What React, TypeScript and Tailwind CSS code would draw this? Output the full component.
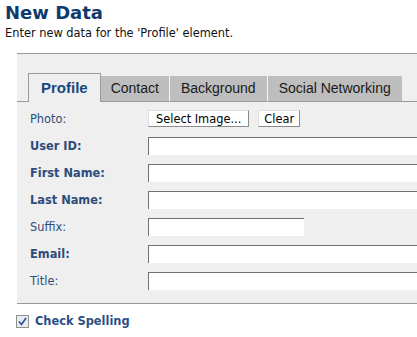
import React from "react";

const Row = ({ label, bold, children }: { label: string; bold?: boolean; children: React.ReactNode }) => (
  <div className="flex h-[27px] items-center">
    <div className={`w-[118px] text-[11.4px] leading-[14px] text-[#2e4c7a] ${bold ? "font-bold" : ""}`}>{label}</div>
    {children}
  </div>
);

const Input = ({ w }: { w?: string }) => (
  <div className={`h-[18px] bg-white border-t border-l border-[#717171] ${w ?? "w-[290px]"}`} />
);

export default function App() {
  return (
    <div className="w-[417px] h-[337px] overflow-hidden bg-white font-['DejaVu_Sans',Verdana,sans-serif] text-black">
      <div className="pl-[5px]">
        <div className="text-[18px] leading-[24px] font-bold text-[#0f3b6c] pt-[1px] h-[24px]">New Data</div>
        <div className="mt-[2px] text-[11.4px] leading-[14px] text-[#111]">Enter new data for the 'Profile' element.</div>
      </div>
      <div className="mt-[13px] ml-[17px] w-[420px] border-y border-[#9a9a9a] bg-[#efefef] pt-[19px]">
        <div className="flex items-end font-['Liberation_Sans',Arial,sans-serif]">
          <div className="w-[11px] border-b border-[#9a9a9a]" />
          <div className="h-[29px] px-[12px] border-t border-x border-[#9a9a9a] bg-[#efefef] flex items-center text-[15px] font-bold text-[#17497f]">
            Profile
          </div>
          <div className="h-[26px] px-[10px] bg-[#bebebe] border-b border-[#9a9a9a] flex items-center text-[14px] text-[#1a1a1a]">
            Contact
          </div>
          <div className="h-[26px] px-[11px] bg-[#bebebe] border-l border-l-[#f4f4f4] border-b border-b-[#9a9a9a] flex items-center text-[14px] text-[#1a1a1a]">
            Background
          </div>
          <div className="h-[26px] px-[11px] bg-[#bebebe] border-l border-l-[#f4f4f4] border-b border-b-[#9a9a9a] flex items-center text-[14px] text-[#1a1a1a]">
            Social Networking
          </div>
          <div className="flex-1 border-b border-[#9a9a9a]" />
        </div>
        <div className="pt-[3px] pl-[13px] pb-[9px]">
          <Row label="Photo:">
            <div className="flex items-center gap-[9px]">
              <button className="h-[17px] px-[7px] bg-white border border-[#e0e0e0] border-r-[#8a8a8a] border-b-[#8a8a8a] text-[11.4px] leading-[14px] text-black">
                Select Image...
              </button>
              <button className="h-[17px] px-[5px] bg-white border border-[#e0e0e0] border-r-[#8a8a8a] border-b-[#8a8a8a] text-[11.4px] leading-[14px] text-black">
                Clear
              </button>
            </div>
          </Row>
          <Row label="User ID:" bold><Input /></Row>
          <Row label="First Name:" bold><Input /></Row>
          <Row label="Last Name:" bold><Input /></Row>
          <Row label="Suffix:"><Input w="w-[156px]" /></Row>
          <Row label="Email:" bold><Input /></Row>
          <Row label="Title:"><Input /></Row>
        </div>
      </div>
      <div className="mt-[10px] ml-[16px] flex items-center">
        <div className="w-[13px] h-[13px] border border-[#8e8f8f] bg-[#e8ebef] flex items-center justify-center">
          <svg width="9" height="9" viewBox="0 0 9 9">
            <path d="M1 4.5 L3.5 7.5 L8 1" fill="none" stroke="#2a4f9a" strokeWidth="1.6" />
          </svg>
        </div>
        <div className="ml-[6px] text-[11.4px] leading-[14px] font-bold text-[#2c4f84]">Check Spelling</div>
      </div>
    </div>
  );
}
